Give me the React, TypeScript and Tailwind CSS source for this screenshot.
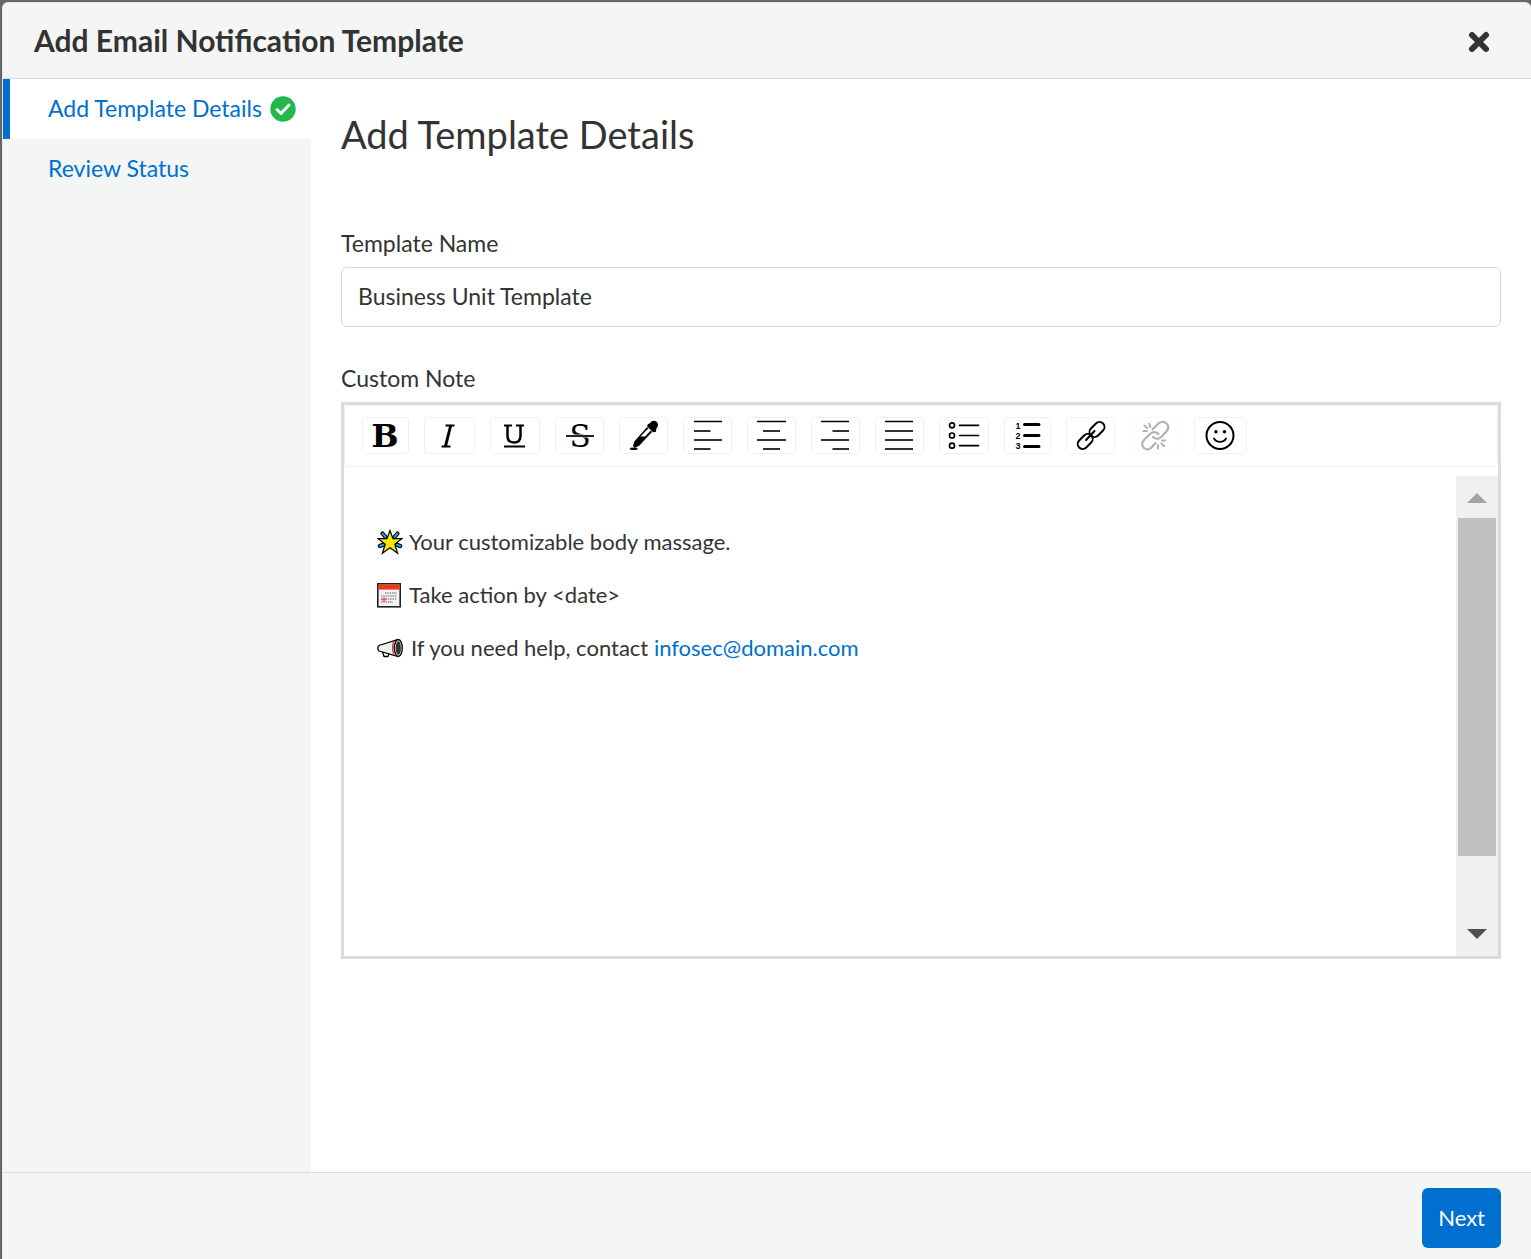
import type { ReactNode } from "react";

const SERIF = "'DejaVu Serif', serif";

function Glyph({ w, children }: { w: number; children: ReactNode }) {
  return (
    <svg width={w} height="35" viewBox={`0 0 ${w} 35`} fill="none" stroke="#000" aria-hidden="true" className="block overflow-visible">
      {children}
    </svg>
  );
}

function Tool({ label, faded, children }: { label: string; faded?: boolean; children: ReactNode }) {
  return (
    <button
      type="button"
      aria-label={label}
      disabled={faded}
      className="shrink-0 rounded-sm border border-[#f1f1f1] bg-white disabled:opacity-30"
    >
      {children}
    </button>
  );
}

function Toolbar() {
  return (
    <div role="toolbar" aria-label="Text formatting" className="flex flex-wrap gap-[15px] rounded border border-[#f0f0f0] bg-white px-[17px] pt-[11px] pb-3">
      <Tool label="Bold">
        <Glyph w={45}>
          <text x="22" y="29" textAnchor="middle" fontFamily={SERIF} fontWeight="bold" fontSize="32" fill="#000" stroke="none">B</text>
        </Glyph>
      </Tool>
      <Tool label="Italic">
        <Glyph w={49}>
          <path d="M20.500 7.500h9M16.500 28.500h9" strokeWidth="1.800" />
          <path d="M25.700 7.500l-5.300 21" strokeWidth="3" />
        </Glyph>
      </Tool>
      <Tool label="Underline">
        <Glyph w={48}>
          <path d="M13 7.500h8M25 7.500h8" strokeWidth="2" />
          <path d="M16.500 7.500v10.500c0 4 2.300 6.500 6.500 6.500s6.500-2.500 6.500-6.500V7.500" strokeWidth="2.500" />
          <path d="M13 28.500h21" strokeWidth="2" />
        </Glyph>
      </Tool>
      <Tool label="Strikethrough">
        <Glyph w={47}>
          <text x="24" y="29" textAnchor="middle" fontFamily={SERIF} fontSize="31" fill="#000" stroke="none">S</text>
          <path d="M10 18h28" stroke="#fff" strokeWidth="3" />
          <path d="M10 18h28" stroke="#222" strokeWidth="2" />
        </Glyph>
      </Tool>
      <Tool label="Text color">
        <Glyph w={47}>
          <circle cx="33.800" cy="7" r="4.200" fill="#000" stroke="none" />
          <path d="M28 6l3-1 5.500 5.500-.8 3.500-2.700.3-6-6z" fill="#000" stroke="none" />
          <path d="M27 9l5 5L19.500 27.500l-4.700 2.300L13 28l1.300-4.500z" fill="#000" stroke="none" />
          <path d="M28.500 10.300l2.300 2.200-5.800 6h-4.500z" fill="#fff" stroke="none" />
          <ellipse cx="13.700" cy="30.800" rx="4" ry="1.300" fill="#000" stroke="none" />
        </Glyph>
      </Tool>
      <Tool label="Align left">
        <Glyph w={47}>
          <path d="M10 3.500h28" strokeWidth="1.500" />
          <path d="M10 13h16.500M10 22h28M10 31h16.500" stroke="#333" strokeWidth="1.800" />
        </Glyph>
      </Tool>
      <Tool label="Align center">
        <Glyph w={47}>
          <path d="M9 3.500h29" strokeWidth="1.500" />
          <path d="M15 13h17M9 22h29M15 31h17" stroke="#333" strokeWidth="1.800" />
        </Glyph>
      </Tool>
      <Tool label="Align right">
        <Glyph w={47}>
          <path d="M9 3.500h28" strokeWidth="1.500" />
          <path d="M20.500 13h16.500M9 22h28M20.500 31h16.500" stroke="#333" strokeWidth="1.800" />
        </Glyph>
      </Tool>
      <Tool label="Justify">
        <Glyph w={47}>
          <path d="M9 3.500h28" strokeWidth="1.500" />
          <path d="M9 13h28M9 22h28M9 31h28" stroke="#333" strokeWidth="1.800" />
        </Glyph>
      </Tool>
      <Tool label="Bulleted list">
        <Glyph w={48}>
          <g strokeWidth="1.700">
            <circle cx="12" cy="7.300" r="2.500" />
            <circle cx="12" cy="17.500" r="2.500" />
            <circle cx="12" cy="27.700" r="2.500" />
            <path d="M19.500 7.300h19M19.500 17.500h19M19.500 27.700h19" strokeLinecap="round" />
          </g>
        </Glyph>
      </Tool>
      <Tool label="Numbered list">
        <Glyph w={45}>
          <g fontFamily="'Liberation Sans', sans-serif" fontWeight="bold" fontSize="9" fill="#000" stroke="none" textAnchor="middle">
            <text x="13" y="11">1</text>
            <text x="13" y="21">2</text>
            <text x="13" y="31">3</text>
          </g>
          <path d="M19.500 6.500h14.500M19.500 17.500h14.500M19.500 28.500h14.500" strokeWidth="3" strokeLinecap="round" />
        </Glyph>
      </Tool>
      <Tool label="Insert link">
        <Glyph w={47}>
          <g strokeWidth="2" strokeLinecap="round">
            <rect x="21.500" y="6.500" width="17" height="10" rx="5" transform="rotate(-45 30 11.500)" />
            <rect x="9.700" y="18.500" width="17" height="10" rx="5" transform="rotate(-45 18.200 23.500)" />
            <path d="M19 22l8.500-9" />
          </g>
        </Glyph>
      </Tool>
      <Tool label="Remove link" faded>
        <Glyph w={47}>
          <g strokeWidth="2.200" strokeLinecap="round" strokeLinejoin="round">
            <path d="M21.500 11.500l6-6c2.500-2.300 5.800-2.200 8 0s2.300 5.200 0 7.700l-5 5.500c-2.500 2.500-6 2.800-8.500.3" />
            <path d="M27.500 16c-2.500-2.700-5.800-2.500-8.200-.2l-6.300 6.200c-2.300 2.500-2.400 5.700-.3 7.800s5.400 2 7.800-.3l4-4.500" />
            <path d="M18.300 5.500l1 3.500M13.500 7.500l2.700 2.500M12.500 13h3.500M27 27v3.500M30.500 25.500l2.500 2.500M31 22.500h3" strokeWidth="2" />
          </g>
        </Glyph>
      </Tool>
      <Tool label="Insert emoji">
        <Glyph w={51}>
          <circle cx="25" cy="17.500" r="13.500" strokeWidth="2" />
          <path d="M19 20.500c1.300 2.200 3.400 3.300 6 3.300s4.700-1.100 6-3.300" strokeWidth="1.800" strokeLinecap="round" />
          <circle cx="21" cy="13.700" r="1.700" fill="#000" stroke="none" />
          <circle cx="29.500" cy="13.700" r="1.700" fill="#000" stroke="none" />
        </Glyph>
      </Tool>
    </div>
  );
}

function StarIcon() {
  return (
    <svg width="26" height="26" viewBox="0 0 26 26" aria-hidden="true" className="shrink-0">
      <g strokeLinecap="round">
        <path d="M5.500 4.500l3 3.500M20.500 4.500l-3 3.500M2.800 17l4-1.500M23.200 17l-4-1.500" stroke="#000" strokeWidth="4.200" />
        <path d="M5.500 4.500l3 3.500M20.500 4.500l-3 3.500M2.800 17l4-1.500M23.200 17l-4-1.500" stroke="#1b9de0" strokeWidth="2" />
      </g>
      <path d="M13 1.500l3 8.200h8.800l-7 5.500 2.800 9-7.600-5.500-7.600 5.500 2.800-9-7-5.500H10z" fill="#ffe600" stroke="#000" strokeWidth="1.200" />
    </svg>
  );
}

function CalendarIcon() {
  return (
    <svg width="24" height="26" viewBox="0 0 24 26" aria-hidden="true" className="shrink-0">
      <rect x="0.800" y="1.800" width="22.400" height="23" fill="#f4f4f4" stroke="#222" strokeWidth="1.600" />
      <path d="M1.600 2.600h20.800V7.600H1.600z" fill="#f03a17" />
      <path d="M8 11h12M4 14h16M4 17h16M4 20h12" stroke="#aaa" strokeWidth="2" strokeDasharray="1.500 .800" />
      <path d="M7 15v5M4.500 17.500h5M5.300 15.800l3.400 3.400M8.700 15.800l-3.400 3.400" stroke="#f0604a" strokeWidth="1" />
    </svg>
  );
}

function MegaphoneIcon() {
  return (
    <svg width="26" height="26" viewBox="0 0 26 26" aria-hidden="true" className="shrink-0">
      <path d="M5.500 16.500l1.500 5h4l1.500-4" fill="#fff" stroke="#000" strokeWidth="1.300" strokeLinejoin="round" />
      <path d="M20.500 4.700L2 10.500c-1.600 1.500-1.600 4 0 5.500L20.500 21.300z" fill="#f0f0f0" stroke="#000" strokeWidth="1.300" strokeLinejoin="round" />
      <path d="M16.800 6.500c-1.500 4-1.500 9 0 13" stroke="#e4304b" strokeWidth="1.300" fill="none" />
      <ellipse cx="21.300" cy="13" rx="4" ry="8.500" fill="#ddd" stroke="#000" strokeWidth="1.300" />
      <ellipse cx="21.300" cy="13" rx="2.600" ry="6.800" fill="#333" />
    </svg>
  );
}

export default function App() {
  return (
    <div className="flex min-h-screen bg-[#666] pt-0.5 pl-0.5 font-['Lato',sans-serif] text-[23px] text-[#333]">
      <div role="dialog" aria-labelledby="dialog-title" className="flex grow flex-col overflow-hidden rounded-t-md border-t border-l border-[#e3e5e4] bg-white">
        <header className="flex h-[76px] items-center justify-between border-b border-[#d8dbda] bg-[#f4f6f5] pr-10 pl-[31px]">
          <h1 id="dialog-title" className="pb-0.5 text-[30px] leading-9 font-bold">Add Email Notification Template</h1>
          <button type="button" aria-label="Close" className="pt-0.5">
            <svg width="24" height="24" viewBox="0 0 24 24" stroke="#333" strokeWidth="6" strokeLinecap="round" aria-hidden="true">
              <path d="M5 5l14 14M19 5L5 19" />
            </svg>
          </button>
        </header>

        <div className="flex grow">
          <nav aria-label="Steps" className="w-[308px] shrink-0 bg-[#f4f6f5] leading-[58px] text-[#006fcf]">
            <a href="#details" aria-current="step" className="flex h-[60px] gap-2 border-l-[7px] border-[#006fcf] bg-white pl-[38px]">
              Add Template Details
              <svg width="26" height="26" viewBox="0 0 26 26" fill="none" aria-hidden="true" className="self-center">
                <circle cx="13" cy="13" r="12.700" fill="#22b84b" />
                <path d="M7 13.500l4 4 8-8.500" stroke="#fff" strokeWidth="3" strokeLinecap="round" strokeLinejoin="round" />
              </svg>
            </a>
            <a href="#review" className="block h-[60px] pl-[45px]">Review Status</a>
          </nav>

          <main className="flex min-w-0 grow flex-col px-[30px] pt-8">
            <h2 className="text-[38px] leading-[46px]">Add Template Details</h2>

            <label htmlFor="template-name" className="mt-[71px] leading-[30px]">Template Name</label>
            <input
              id="template-name"
              type="text"
              defaultValue="Business Unit Template"
              className="mt-[9px] h-[60px] w-full rounded-md border border-[#d8dbda] px-4 pb-0.5"
            />

            <span id="note-label" className="mt-9 leading-[30px]">Custom Note</span>
            <div className="mt-[9px] border-[3px] border-[#dadddc]">
              <Toolbar />
              <div className="mt-[9px] flex h-[480px]">
                <div
                  role="textbox"
                  aria-multiline="true"
                  aria-labelledby="note-label"
                  contentEditable
                  suppressContentEditableWarning
                  className="flex grow flex-col gap-[21px] pt-[50px] pl-[33px] text-[22px] leading-8 outline-none"
                >
                  <p className="flex items-center gap-1.5"><StarIcon />Your customizable body massage.</p>
                  <p className="flex items-center gap-2"><CalendarIcon />Take action by &lt;date&gt;</p>
                  <p className="flex items-center gap-2">
                    <MegaphoneIcon />
                    <span>If you need help, contact <a href="mailto:infosec@domain.com" className="text-[#006fcf]">infosec@domain.com</a></span>
                  </p>
                </div>
                <div className="flex w-[42px] shrink-0 flex-col items-center bg-[#f0f0f0]" aria-hidden="true">
                  <svg width="42" height="42" viewBox="0 0 42 42"><path d="M21 17l10 10H11z" fill="#a3a3a3" /></svg>
                  <div className="h-[338px] w-[38px] bg-[#c1c1c1]" />
                  <svg width="42" height="42" viewBox="0 0 42 42" className="mt-auto"><path d="M21 25L11 15h20z" fill="#505050" /></svg>
                </div>
              </div>
            </div>
          </main>
        </div>

        <footer className="flex h-[87px] justify-end border-t border-[#d8dbda] bg-[#f4f6f5] pt-[15px] pr-[30px]">
          <button type="button" className="h-[60px] rounded-md bg-[#006fcf] px-4 pb-0.5 text-[22px] text-white">Next</button>
        </footer>
      </div>
    </div>
  );
}
